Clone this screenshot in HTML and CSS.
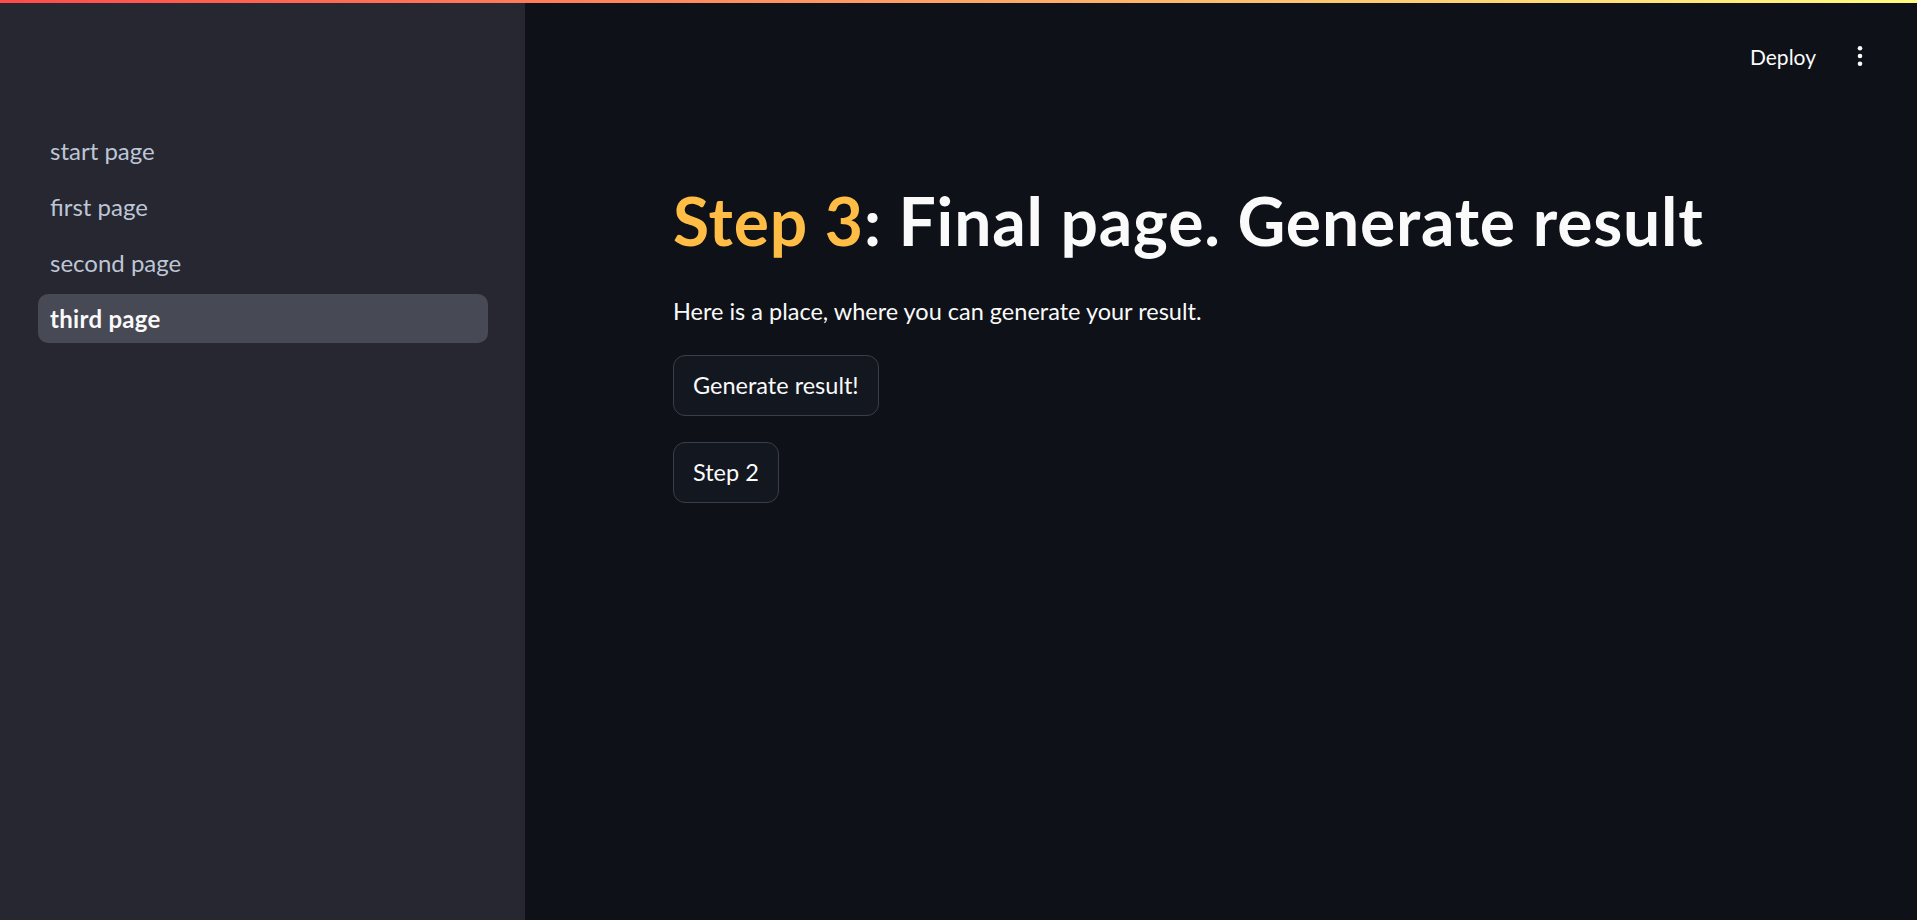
FILE: index.html
```html
<!DOCTYPE html>
<html lang="en">
<head>
<meta charset="utf-8">
<title>third page</title>
<link rel="stylesheet" href="styles.css">
</head>
<body>
<div class="decoration"></div>
<div class="app">
  <aside class="sidebar">
    <nav class="nav">
      <a class="nav-item">start page</a>
      <a class="nav-item">first page</a>
      <a class="nav-item">second page</a>
      <a class="nav-item active">third page</a>
    </nav>
  </aside>
  <main class="main">
    <header class="header">
      <span class="deploy">Deploy</span>
      <span class="kebab">
        <svg width="6" height="22" viewBox="0 0 6 22"><circle cx="3" cy="3.3" r="2.3" fill="#fafafa"/><circle cx="3" cy="11" r="2.3" fill="#fafafa"/><circle cx="3" cy="18.8" r="2.3" fill="#fafafa"/></svg>
      </span>
    </header>
    <section class="content">
      <h1 class="title"><span class="accent">Step 3</span>: Final page. Generate result</h1>
      <p class="text">Here is a place, where you can generate your result.</p>
      <div class="buttons">
        <button class="btn">Generate result!</button>
        <button class="btn">Step 2</button>
      </div>
    </section>
  </main>
</div>
</body>
</html>
```
FILE: styles.css
```css
html, body {
  margin: 0;
  padding: 0;
  height: 100%;
  background: #0e1117;
  font-family: "Lato", "Noto Sans", sans-serif;
  color: #fafafa;
}
.decoration {
  position: fixed;
  top: 0;
  left: 0;
  right: 0;
  height: 3px;
  background: linear-gradient(90deg, #ff4b4b, #fffd80);
  z-index: 10;
}
.app {
  display: flex;
  height: 920px;
}
.sidebar {
  width: 525px;
  flex: 0 0 525px;
  box-sizing: border-box;
  background: #262730;
  padding: 126px 37px 0 38px;
}
.nav {
  display: flex;
  flex-direction: column;
  gap: 7px;
}
.nav-item {
  display: flex;
  align-items: center;
  height: 49px;
  padding: 0 12px;
  border-radius: 10px;
  font-size: 24px;
  color: #bdc6d6;
}
.nav-item.active {
  background: #474955;
  color: #fafafa;
  font-weight: 700;
  letter-spacing: 0.3px;
}
.main {
  flex: 1;
  display: flex;
  flex-direction: column;
  background: #0e1117;
}
.header {
  height: 112px;
  display: flex;
  align-items: center;
  justify-content: flex-end;
  padding-right: 54px;
}
.deploy {
  font-size: 21px;
  color: #fafafa;
  margin-right: 41px;
}
.kebab {
  display: flex;
  width: 6px;
  height: 22px;
}
.content {
  padding-left: 148px;
}
.title {
  margin: 69px 0 0;
  font-size: 66px;
  line-height: 1.2;
  font-weight: 700;
  letter-spacing: 0.8px;
  color: #fafafa;
  white-space: nowrap;
}
.accent {
  color: #ffbd45;
}
.text {
  margin: 33px 0 0;
  font-size: 23.5px;
  line-height: 1.6;
}
.buttons {
  margin-top: 24px;
  display: flex;
  flex-direction: column;
  align-items: flex-start;
  gap: 26px;
}
.btn {
  height: 61px;
  padding: 0 19px;
  box-sizing: border-box;
  background: #131720;
  border: 1px solid #3b3e47;
  border-radius: 12px;
  color: #fafafa;
  font-family: "Lato", "Noto Sans", sans-serif;
  font-size: 23.5px;
}
```
